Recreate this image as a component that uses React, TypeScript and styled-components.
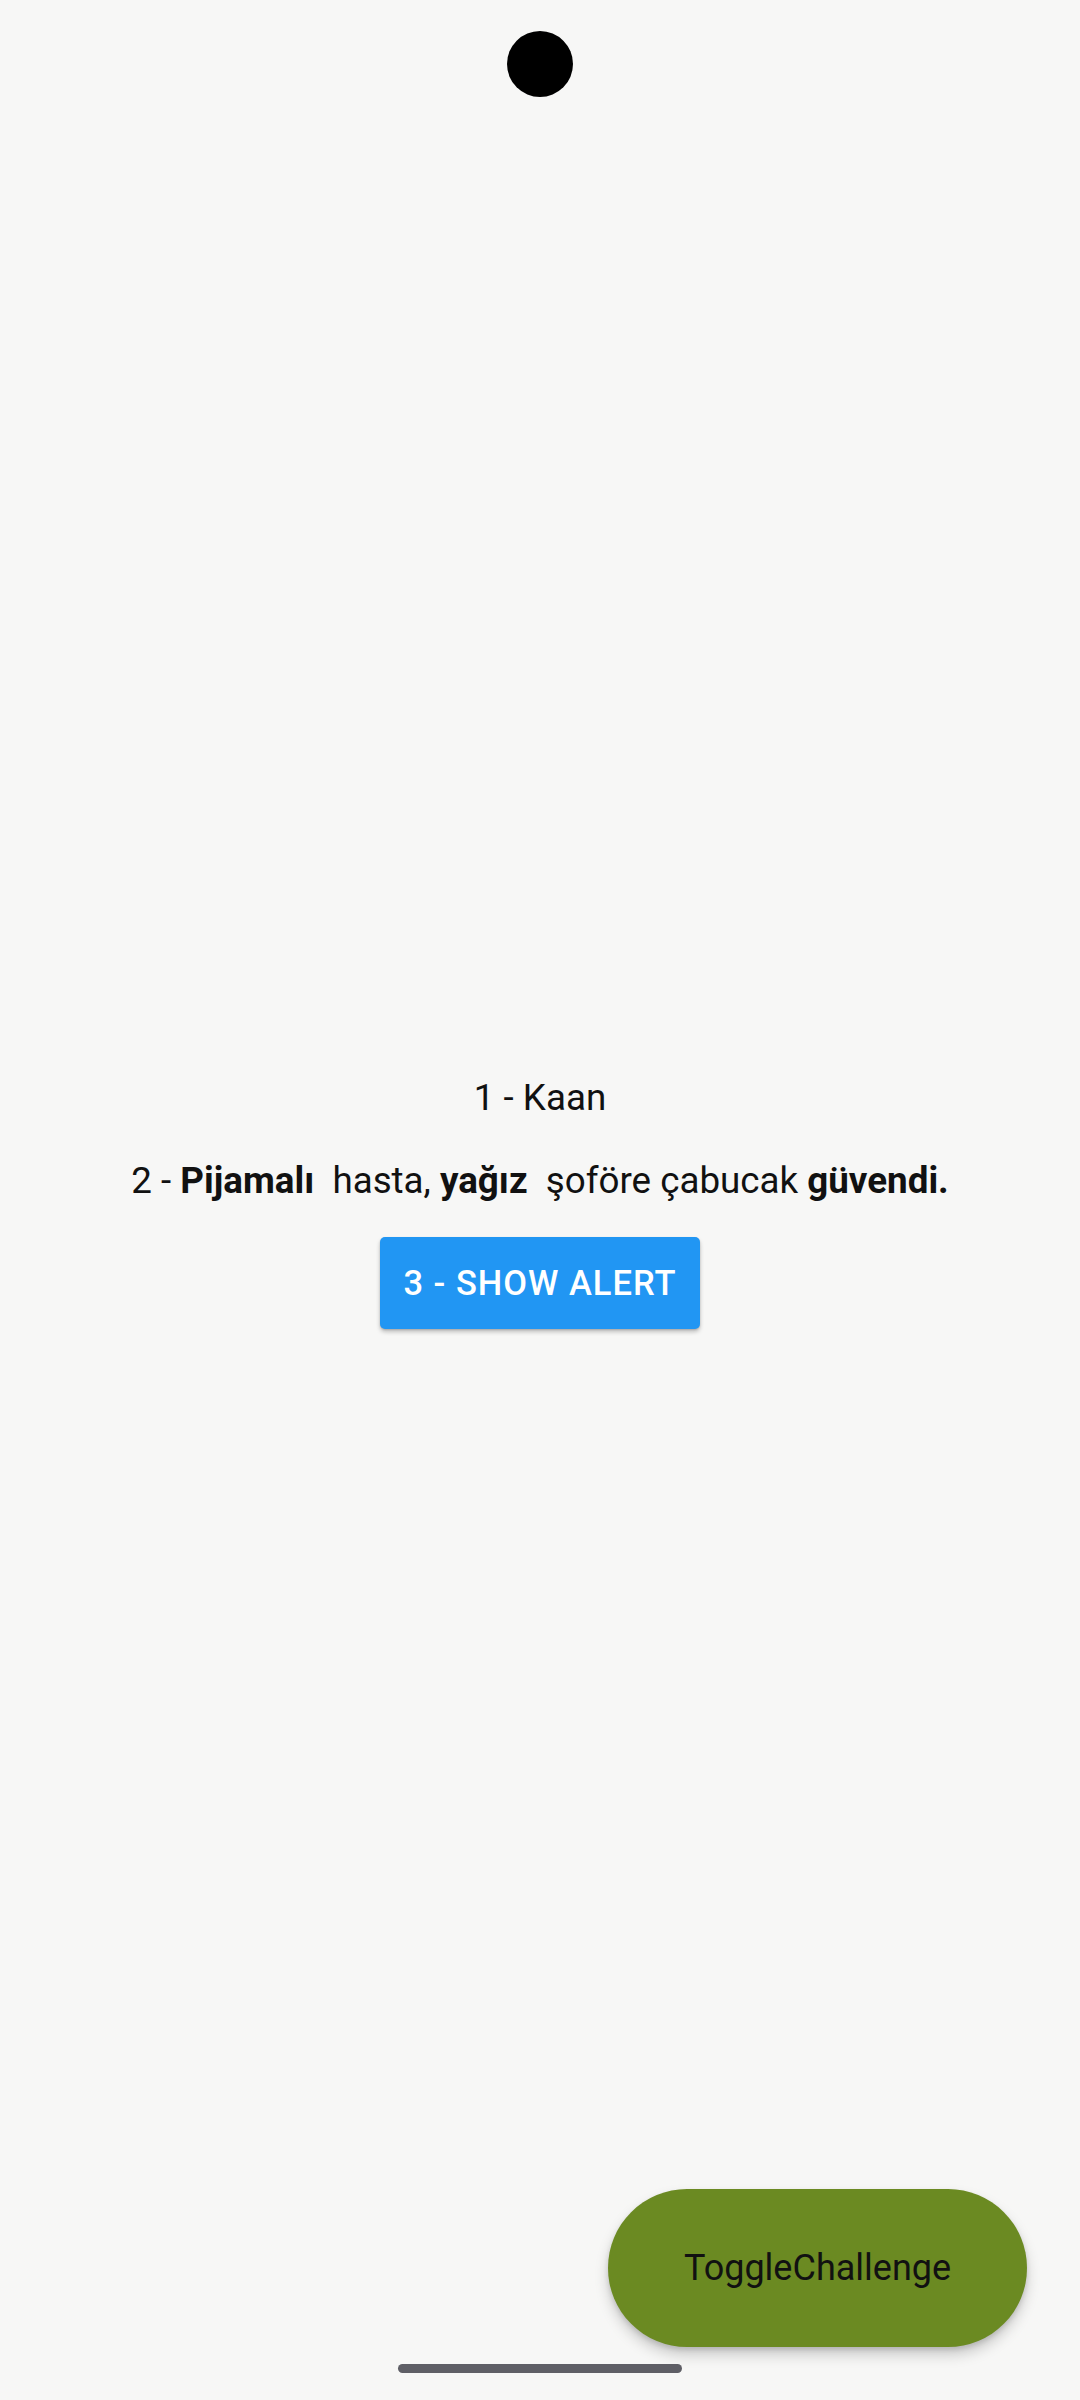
import styled, { createGlobalStyle } from 'styled-components';

const GlobalStyle = createGlobalStyle`
  html, body {
    margin: 0;
    padding: 0;
    background: #f7f7f6;
  }
  body {
    font-family: Roboto, "Noto Sans", "Liberation Sans", sans-serif;
  }
`;

const Screen = styled.div`
  position: relative;
  width: 1080px;
  height: 2400px;
  overflow: hidden;
  background: #f7f7f6;
  display: flex;
  align-items: center;
  justify-content: center;
`;

const CameraHole = styled.div`
  position: absolute;
  top: 31px;
  left: 507px;
  width: 66px;
  height: 66px;
  border-radius: 50%;
  background: #000;
`;

const Content = styled.main`
  display: flex;
  flex-direction: column;
  align-items: center;
  padding-top: 4px;
`;

const Line = styled.p<{ gapBelow: number }>`
  margin: 0 0 ${({ gapBelow }) => gapBelow}px;
  font-size: 36.75px;
  line-height: 43px;
  color: #111;
  white-space: pre;
  text-align: center;
`;

const Bold = styled.b`
  font-weight: 700;
`;

const AlertButton = styled.button`
  height: 92px;
  padding: 0 23px;
  border: none;
  border-radius: 5px;
  background: #2196f3;
  color: #fff;
  font-family: Roboto, "Noto Sans", sans-serif;
  font-weight: 500;
  font-size: 34.5px;
  letter-spacing: 1px;
  text-transform: uppercase;
  box-shadow: 0 3px 4px rgba(0, 0, 0, 0.22), 0 1px 2px rgba(0, 0, 0, 0.14);
  cursor: pointer;
`;

const Fab = styled.button`
  position: absolute;
  right: 53px;
  bottom: 53px;
  width: 419px;
  height: 158px;
  border: none;
  border-radius: 79px;
  background: #6b8a22;
  color: #111;
  font-family: Roboto, "Noto Sans", sans-serif;
  font-size: 36px;
  box-shadow: 0 8px 14px rgba(0, 0, 0, 0.18), 0 3px 5px rgba(0, 0, 0, 0.12);
  cursor: pointer;
`;

const HomeIndicator = styled.div`
  position: absolute;
  left: 398px;
  top: 2364px;
  width: 284px;
  height: 9px;
  border-radius: 5px;
  background: #5f5f66;
`;

export default function App() {
  return (
    <Screen>
      <GlobalStyle />
      <CameraHole />
      <Content>
        <Line gapBelow={40}>1 - Kaan</Line>
        <Line gapBelow={35}>
          2 - <Bold>Pijamalı</Bold>  hasta, <Bold>yağız</Bold>  şoföre çabucak <Bold>güvendi.</Bold>
        </Line>
        <AlertButton>3 - Show Alert</AlertButton>
      </Content>
      <Fab>ToggleChallenge</Fab>
      <HomeIndicator />
    </Screen>
  );
}
